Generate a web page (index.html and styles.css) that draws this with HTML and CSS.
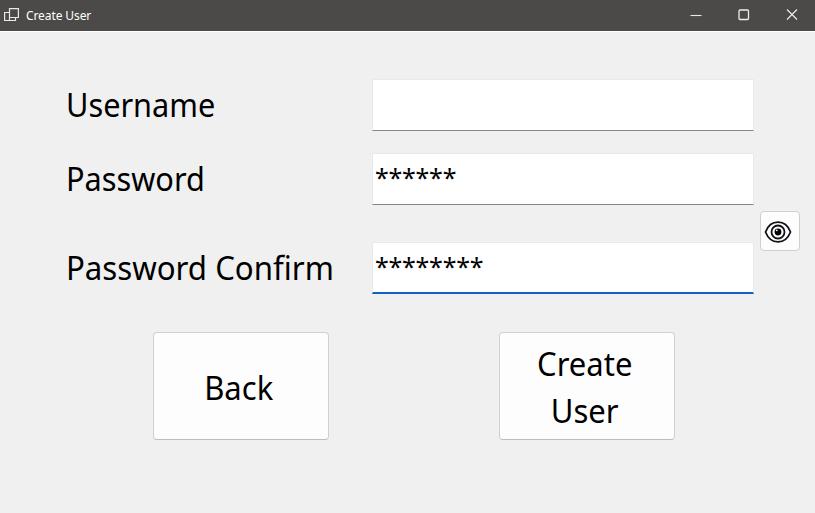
FILE: index.html
```html
<!DOCTYPE html>
<html lang="en">
<head>
<meta charset="utf-8">
<title>Create User</title>
<link rel="stylesheet" href="styles.css">
</head>
<body>
<div class="window">
  <header class="titlebar">
    <svg class="app-icon" width="16" height="16" viewBox="0 0 16 16" fill="none" stroke="#e8e8e8" stroke-width="1.2"><path d="M5.500 4.500H.6v8h10.900V9.500M5.500 .6h8.900v8.900H5.500zM5.500 9.500v3"/></svg>
    <span class="title">Create User</span>
    <div class="controls">
      <svg width="12" height="12" viewBox="0 0 12 12" fill="none" stroke="#e8e8e8" stroke-width="1.1"><path d="M.5 6.500h11"/></svg>
      <svg width="12" height="12" viewBox="0 0 12 12" fill="none" stroke="#eee" stroke-width="1.300"><rect x="1" y="1" width="9.500" height="9.500" rx="1"/></svg>
      <svg width="12" height="12" viewBox="0 0 12 12" fill="none" stroke="#eee" stroke-width="1.100"><path d="M1 .5l10 10M11 .5l-10 10"/></svg>
    </div>
  </header>
  <main class="form">
    <section class="entry">
      <div class="fields">
        <div class="row first"><div class="label"><span class="text">Username</span></div><div class="input"></div></div>
        <div class="row"><div class="label"><span class="text">Password</span></div><div class="input">******</div></div>
        <div class="row confirm"><div class="label"><span class="text wide">Password Confirm</span></div><div class="input focused">********</div></div>
      </div>
      <button class="reveal" aria-label="Show password">
        <svg width="28" height="24" viewBox="0 0 28 24" fill="none" stroke="#101018" stroke-width="1.800"><path d="M1.500 12C4 5.500 8.500 2.200 14 2.200S24 5.500 26.500 12C24 18.500 19.500 21.800 14 21.800S4 18.500 1.500 12z"/><circle cx="14" cy="12" r="6.500"/><circle cx="14" cy="12" r="3.400" fill="#000" stroke="none"/><circle cx="12.800" cy="10.300" r=".9" fill="#fff" stroke="none"/></svg>
      </button>
    </section>
    <section class="actions">
      <button class="action"><span class="caption">Back</span></button>
      <button class="action double"><span class="caption">Create<br>User</span></button>
    </section>
  </main>
</div>
</body>
</html>
```
FILE: styles.css
```css
* { box-sizing: border-box; }
body { margin: 0; background: #f0f0f0; color: #000; font-family: "Noto Sans", "Open Sans", sans-serif; }
.window { width: 815px; height: 513px; overflow: hidden; background: #f0f0f0; }
.titlebar { display: flex; align-items: center; height: 31px; padding: 0 17px 0 4px; background: #4c4a48; color: #fff; }
.app-icon { margin-top: 0; }
.title { margin-left: 6px; font-size: 12px; line-height: 16px; letter-spacing: -.1px; }
.controls { display: flex; gap: 36px; margin-left: auto; }
.controls svg { display: block; margin-top: -1px; }
.form { border-top: 1px solid #fff; padding: 47px 15px 0 66px; }
.entry { display: flex; gap: 6px; }
.fields { width: 688px; }
.row { display: flex; height: 51px; margin-bottom: 22px; }
.row.first { margin-bottom: 23px; }
.row.confirm { margin-top: 38px; margin-bottom: 0; height: 52px; }
.label { width: 306px; line-height: 51px; font-size: 33px; white-space: nowrap; }
.text { display: inline-block; transform: scaleX(.93); transform-origin: left; }
.text.wide { transform: scaleX(.945); }
.input { width: 382px; height: 52px; padding-left: 2px; background: #fff; border: 1px solid #e9e9e9; border-bottom-color: #868686; font-size: 25px; font-weight: 400; line-height: 46px; letter-spacing: -.25px; }
.input.focused { border-bottom: 2px solid #0f62bd; }
.reveal { width: 40px; height: 40px; margin-top: 132px; padding: 2px 4px 0 0; display: flex; align-items: center; justify-content: center; background: #fdfdfd; border: 1px solid #d0d0d0; border-radius: 4px; }
.reveal svg { width: 28px; height: 24px; }
.actions { display: flex; gap: 170px; margin: 38px 0 0 87px; }
.action { width: 176px; height: 108px; padding: 3px 5px 0 0; background: #fdfdfd; border: 1px solid #d0d0d0; border-bottom-color: #bdbdbd; border-radius: 4px; color: #000; font: 33px/47px "Noto Sans", "Open Sans", sans-serif; }
.action.double { padding: 2px 5px 0 0; }
.caption { display: inline-block; transform: scaleX(.94); }
```
